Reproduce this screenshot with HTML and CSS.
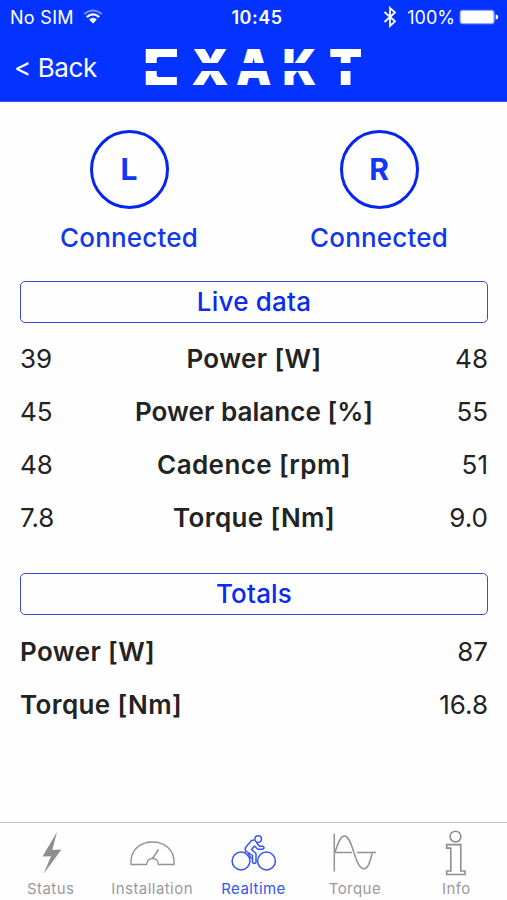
FILE: index.html
```html
<!DOCTYPE html>
<html lang="en">
<head>
  <meta charset="utf-8">
  <title>Exakt - Realtime</title>
  <link rel="stylesheet" href="styles.css">
</head>
<body>

<header class="header">
  <div class="status-bar">
    <div class="status-left">
      <span>No SIM</span>
      <svg class="wifi" width="20" height="16" viewBox="0 0 20 16" fill="none" stroke="#fff">
        <path d="M1.2 5.1Q10-2.2 18.8 5.1" stroke-width="1.9" opacity=".45"/>
        <path d="M3.8 8.1Q10 2.8 16.2 8.1" stroke-width="2.2"/>
        <path d="M6.2 10.5Q10 7.2 13.8 10.5L10 14.4z" fill="#fff" stroke="none"/>
      </svg>
    </div>
    <span class="time">10:45</span>
    <div class="status-right">
      <svg class="bluetooth" width="14" height="22" viewBox="0 0 14 22" fill="none" stroke="#fff" stroke-width="1.8">
        <path d="M1.5 6L12 15.3L7 20V2L12 6.5L1.5 16"/>
      </svg>
      <span class="percent">100%</span>
      <svg class="battery" width="40" height="16" viewBox="0 0 40 16">
        <rect x=".6" y=".8" width="35" height="14.4" rx="3" fill="#8fa2ff"/>
        <rect x="1.8" y="2" width="32.6" height="12" rx="2" fill="#fff"/>
        <path d="M36.7 5.2Q39.3 6 39.3 8T36.7 10.8z" fill="#fff"/>
      </svg>
    </div>
  </div>
  <div class="nav-bar">
    <a class="back">&lt; Back</a>
    <svg class="logo" width="240" height="66" viewBox="-5 -13 240 66">
      <text transform="translate(-2 37.4) scale(1.19 1)">E</text>
      <text transform="translate(46.4 37.4) scale(.95 1)">X</text>
      <text transform="translate(91.1 37.4) scale(.89 1)">A</text>
      <text transform="translate(137.4 37.4) scale(.89 1)">K</text>
      <text transform="translate(184 37.4) scale(.97 1)">T</text>
      <rect x="-5" y="15" width="230" height="8"/>
      <rect x="11.7" y="10" width="24" height="18"/>
    </svg>
  </div>
</header>

<main class="content">
  <div class="pedals">
    <div class="pedal">
      <div class="circle">L</div>
      <div class="state">Connected</div>
    </div>
    <div class="pedal">
      <div class="circle">R</div>
      <div class="state">Connected</div>
    </div>
  </div>

  <h2>Live data</h2>
  <div class="row"><span>39</span><b>Power [W]</b><span>48</span></div>
  <div class="row"><span>45</span><b class="balance">Power balance [%]</b><span>55</span></div>
  <div class="row"><span>48</span><b>Cadence [rpm]</b><span>51</span></div>
  <div class="row"><span>7.8</span><b>Torque [Nm]</b><span>9.0</span></div>

  <h2 class="totals">Totals</h2>
  <div class="row total"><b>Power [W]</b><span>87</span></div>
  <div class="row total"><b>Torque [Nm]</b><span>16.8</span></div>
</main>

<nav class="tabs">
  <a class="tab">
    <svg width="50" height="50" viewBox="0 0 50 50">
      <path d="M31 4L16.5 28.5L25 28.3L17.5 46L35.5 21.5L26.3 22z" fill="#8e8e8e"/>
    </svg>
    <span>Status</span>
  </a>
  <a class="tab">
    <svg width="50" height="50" viewBox="0 0 50 50" fill="none" stroke="#929292" stroke-width="1.4">
      <path d="M4 36.5V34C4 22 13 14 25.5 14S47 22 47 34V36.5H31.5C31 32.5 29 30.5 25.5 30.5S20 32.5 19.5 36.5z"/>
      <path d="M25.5 30.5L31.5 21.5"/>
    </svg>
    <span>Installation</span>
  </a>
  <a class="tab active">
    <svg width="50" height="50" viewBox="0 0 50 50" fill="none" stroke="#3454f5" stroke-width="1.5" stroke-linejoin="round">
      <circle cx="12" cy="33" r="8.9"/>
      <circle cx="37.5" cy="33" r="8.9"/>
      <circle cx="29.2" cy="11" r="3.3"/>
      <path d="M25.6 12L22.5 12.5L16.5 19.5Q15.6 22 17.5 23.5L23.5 27.5V34.5Q25.2 36.5 27 34.5V25.5L22.5 21.5L25.5 18L28.8 21.2H34Q36 19.8 34 18.3H30.5L27.5 14.5"/>
      <path d="M16.5 23.5L15.5 25.5M19 24.8L22.5 31"/>
    </svg>
    <span>Realtime</span>
  </a>
  <a class="tab">
    <svg width="50" height="50" viewBox="0 0 50 50" fill="none" stroke="#929292" stroke-width="1.5">
      <path d="M4.3 5.5V43.5M4.3 24.5H22M27 24.5H46"/>
      <path d="M5 24.5C8.5 13 11 8 14.5 8C23 8 24.5 40.7 34 40.7C38.5 40.7 40 33 42.5 24.5"/>
    </svg>
    <span>Torque</span>
  </a>
  <a class="tab">
    <svg width="50" height="50" viewBox="0 0 50 50" fill="none" stroke="#8e8e8e" stroke-width="1.6">
      <circle cx="24.5" cy="8.6" r="5.4"/>
      <path d="M15.6 16.6H29.8V43H34V46.5H15.6V43H19.8V20.1H15.6z"/>
    </svg>
    <span>Info</span>
  </a>
</nav>

</body>
</html>
```
FILE: styles.css
```css
body {
  margin: 0;
  height: 900px;
  display: flex;
  flex-direction: column;
  background: #fefefe;
  color: #232323;
  font-family: Inter, "Liberation Sans", sans-serif;
}
.header {
  box-sizing: border-box;
  height: 102px;
  background: #0433ff;
  border-bottom: 1px solid #3a55e0;
  color: #fff;
}
.status-bar {
  display: grid;
  grid-template-columns: 1fr auto 1fr;
  align-items: center;
  height: 34px;
  padding: 0 9px 0 10px;
  font-size: 18px;
}
.status-left, .status-right {
  display: flex;
  align-items: center;
}
.status-left {
  letter-spacing: 0.3px;
}
.status-right {
  justify-content: flex-end;
}
.wifi {
  margin-left: 9px;
}
.time {
  margin-left: 6px;
  font-weight: 600;
  letter-spacing: 0.5px;
}
.bluetooth {
  margin-right: 10px;
}
.percent {
  margin-right: 4px;
}
.battery {
  margin-right: -1px;
}
.nav-bar {
  display: flex;
  align-items: center;
  height: 67px;
  padding-left: 14px;
}
.back {
  width: 126px;
  font-size: 26px;
  letter-spacing: -0.4px;
}
.logo {
  overflow: visible;
}
.logo text {
  fill: #fff;
  font-size: 50px;
  font-weight: 900;
}
.logo rect {
  fill: #0433ff;
}
.content {
  flex: 1;
  padding: 28px 19px 0 20px;
}
.pedals {
  display: flex;
  justify-content: space-between;
  padding: 0 34px;
}
.pedal {
  display: flex;
  flex-direction: column;
  align-items: center;
  width: 150px;
}
.circle {
  box-sizing: border-box;
  width: 79px;
  height: 79px;
  border: 3px solid #0525f0;
  border-radius: 50%;
  color: #1238f5;
  font-size: 30px;
  font-weight: 700;
  line-height: 73px;
  text-align: center;
}
.state {
  margin-top: 12px;
  color: #1238e8;
  font-size: 26px;
  font-weight: 500;
  letter-spacing: 0.2px;
  line-height: 34px;
}
h2 {
  box-sizing: border-box;
  height: 42px;
  margin: 26px 0 9px;
  border: 1.5px solid #3a48dc;
  border-radius: 5px;
  color: #0a2cee;
  font-size: 26px;
  font-weight: 500;
  letter-spacing: 0.2px;
  line-height: 39px;
  text-align: center;
}
.row {
  display: grid;
  grid-template-columns: 1fr auto 1fr;
  align-items: center;
  height: 53px;
  font-size: 26px;
}
.row b {
  font-weight: 600;
  letter-spacing: 0.4px;
}
.row .balance {
  letter-spacing: 0.05px;
}
.row span:last-child {
  text-align: right;
}
.totals {
  margin-top: 29px;
  margin-bottom: 10px;
}
.total {
  grid-template-columns: auto 1fr;
}
.tabs {
  box-sizing: border-box;
  display: flex;
  height: 78px;
  padding-top: 5px;
  border-top: 1px solid #c4c4c4;
}
.tab {
  flex: 1;
  display: flex;
  flex-direction: column;
  align-items: center;
  color: #9a9a9a;
  font-size: 15px;
  letter-spacing: 0.45px;
}
.tab span {
  margin-top: 1px;
}
.active {
  color: #3454f5;
}
```
